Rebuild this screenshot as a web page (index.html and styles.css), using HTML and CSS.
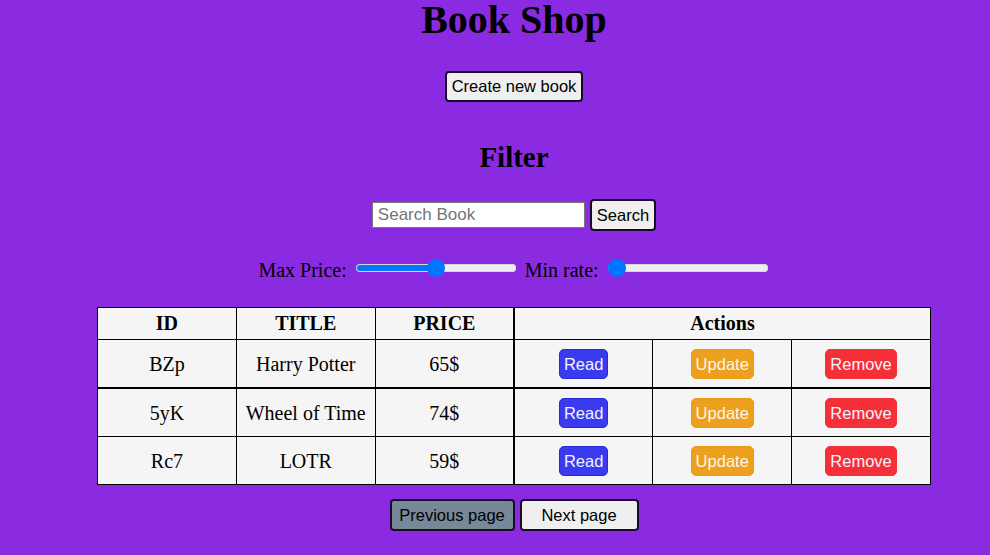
FILE: index.html
```html
<!DOCTYPE html>
<html lang="en">
<head>
<meta charset="utf-8">
<title>Book Shop</title>
<link rel="stylesheet" href="styles.css">
</head>
<body>
<div class="page">
  <h1 class="title">Book Shop</h1>
  <div class="create-row">
    <button class="btn create-btn">Create new book</button>
  </div>
  <h2 class="filter-title">Filter</h2>
  <div class="search-row">
    <input class="search-input" type="text" placeholder="Search Book">
    <button class="btn search-btn">Search</button>
  </div>
  <div class="range-row">
    <label>Max Price: <input class="range" type="range" min="0" max="100" value="50" style="--p: 0.5"></label>
    <label>Min rate: <input class="range" type="range" min="0" max="5" value="0" style="--p: 0"></label>
  </div>
  <table class="books">
    <thead>
      <tr>
        <th>ID</th>
        <th>TITLE</th>
        <th class="sep">PRICE</th>
        <th colspan="3">Actions</th>
      </tr>
    </thead>
    <tbody>
      <tr class="first">
        <td>BZp</td>
        <td>Harry Potter</td>
        <td class="sep">65$</td>
        <td><button class="act read">Read</button></td>
        <td><button class="act update">Update</button></td>
        <td><button class="act remove">Remove</button></td>
      </tr>
      <tr>
        <td>5yK</td>
        <td>Wheel of Time</td>
        <td class="sep">74$</td>
        <td><button class="act read">Read</button></td>
        <td><button class="act update">Update</button></td>
        <td><button class="act remove">Remove</button></td>
      </tr>
      <tr>
        <td>Rc7</td>
        <td>LOTR</td>
        <td class="sep">59$</td>
        <td><button class="act read">Read</button></td>
        <td><button class="act update">Update</button></td>
        <td><button class="act remove">Remove</button></td>
      </tr>
    </tbody>
  </table>
  <div class="pager">
    <button class="btn page-btn prev">Previous page</button>
    <button class="btn page-btn next">Next page</button>
  </div>
</div>
</body>
</html>
```

FILE: styles.css
```css
html, body {
  margin: 0;
  padding: 0;
  background: #8a2be2;
}

body {
  font-family: "Liberation Serif", "Times New Roman", serif;
  color: #000;
}

.page {
  padding-left: 38px;
  text-align: center;
}

.title {
  margin: -3px 0 0;
  font-size: 40px;
  line-height: 46px;
  font-weight: bold;
}

.create-row {
  margin-top: 28px;
}

.btn {
  font-family: "Liberation Sans", Arial, sans-serif;
  font-size: 16.5px;
  color: #000;
  background: #efefef;
  border: 2px solid #1a0a2a;
  border-radius: 4px;
  cursor: pointer;
}

.create-btn {
  height: 31px;
  padding: 0 5px;
}

.filter-title {
  margin: 39px 0 0;
  font-size: 29px;
  line-height: 33px;
  font-weight: bold;
}

.search-row {
  margin-top: 25px;
  display: flex;
  justify-content: center;
  align-items: center;
  gap: 5px;
}

.search-input {
  box-sizing: border-box;
  width: 213px;
  height: 26px;
  margin: 0;
  padding: 1px 5px;
  font-family: "Liberation Sans", Arial, sans-serif;
  font-size: 17px;
  border: 1px solid #767676;
  background: #fff;
}

.search-input::placeholder {
  color: #757575;
}

.search-btn {
  height: 32px;
  padding: 0 5px;
}

.range-row {
  margin-top: 28px;
  font-size: 20px;
  line-height: 23px;
}

.range-row label {
  margin: 0 1px;
}

.range {
  -webkit-appearance: none;
  appearance: none;
  width: 160px;
  height: 18px;
  margin: 0 2px 0 4px;
  padding: 0;
  background: transparent;
  vertical-align: baseline;
}

.range::-webkit-slider-runnable-track {
  height: 8px;
  border-radius: 4px;
  box-shadow: inset 0 0 0 1px #d6d6d6;
  background: linear-gradient(to right, #0075ff calc(9px + (100% - 18px) * var(--p)), #efefef 0);
}

.range::-webkit-slider-thumb {
  -webkit-appearance: none;
  appearance: none;
  width: 18px;
  height: 18px;
  margin-top: -5px;
  border-radius: 50%;
  background: #0075ff;
  border: none;
}

.books {
  margin: 25px auto 0;
  width: 834px;
  table-layout: fixed;
  border-collapse: collapse;
  background: #f5f5f5;
  font-size: 20px;
}

.books th,
.books td {
  border: 1px solid #000;
  text-align: center;
  vertical-align: middle;
}

.books th {
  padding: 4px 0;
  line-height: 23px;
  font-weight: bold;
}

.books td {
  padding: 9px 0 8px;
  line-height: 23px;
}

.books .sep {
  border-right: 2px solid #000;
}

.books tr.first td {
  border-bottom: 2px solid #000;
}

.act {
  height: 30px;
  padding: 0 4px;
  font-family: "Liberation Sans", Arial, sans-serif;
  font-size: 16.5px;
  color: #f4f4ff;
  border-radius: 5px;
  border: 1px solid transparent;
  vertical-align: middle;
  cursor: pointer;
}

.read {
  background: #3a3aee;
  border-color: #2a2ad0;
}

.update {
  background: #eca01e;
  border-color: #e89c1a;
  color: #fff6e6;
}

.remove {
  background: #f42f38;
  border-color: #f0303a;
}

.pager {
  margin-top: 14px;
  display: flex;
  justify-content: center;
  gap: 5px;
}

.page-btn {
  height: 32px;
  padding: 0;
}

.prev {
  width: 125px;
  background: #778899;
}

.next {
  width: 119px;
}
```
